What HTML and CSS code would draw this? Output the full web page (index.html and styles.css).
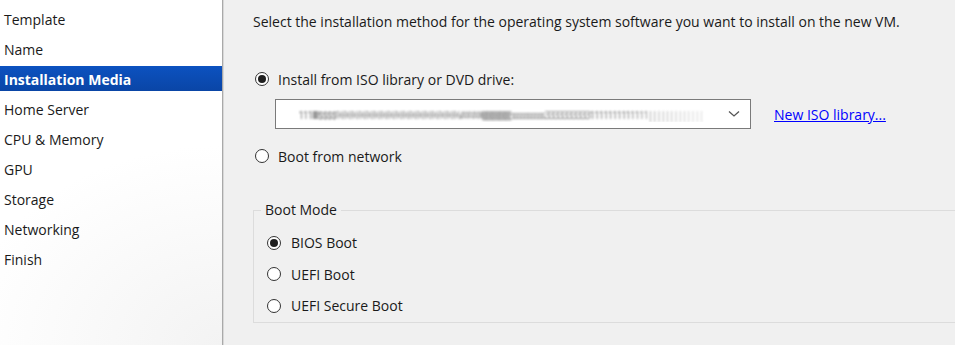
FILE: index.html
```html
<!DOCTYPE html>
<html>
<head>
<link rel="stylesheet" href="styles.css">
</head>
<body>
<div class="wizard">
  <div class="steps">
    <div class="step">Template</div>
    <div class="step">Name</div>
    <div class="step current">Installation Media</div>
    <div class="step">Home Server</div>
    <div class="step">CPU &amp; Memory</div>
    <div class="step">GPU</div>
    <div class="step">Storage</div>
    <div class="step">Networking</div>
    <div class="step">Finish</div>
  </div>
  <div class="page">
    <p class="intro">Select the installation method for the operating system software you want to install on the new VM.</p>

    <div class="option first">
      <span class="radio checked"></span>
      <span>Install from ISO library or DVD drive:</span>
    </div>

    <div class="isorow">
      <div class="combo">
        <span class="blurred">111IIIII$$$$%%%%%%%%%%%%%%%%%####((((((((((((((((((((ssssssssss33333333331111111111111|||||||||||||</span>
        <svg class="chevron" width="12" height="8" viewBox="0 0 12 8">
          <polyline points="1,1.5 6,6 11,1.5" fill="none" stroke="#555" stroke-width="1.3"/>
        </svg>
      </div>
      <a class="link" href="#">New ISO library...</a>
    </div>

    <div class="option">
      <span class="radio"></span>
      <span>Boot from network</span>
    </div>

    <div class="group">
      <div class="legend">Boot Mode</div>
      <div class="option sub">
        <span class="radio checked"></span>
        <span>BIOS Boot</span>
      </div>
      <div class="option sub">
        <span class="radio"></span>
        <span>UEFI Boot</span>
      </div>
      <div class="option sub">
        <span class="radio"></span>
        <span>UEFI Secure Boot</span>
      </div>
    </div>
  </div>
</div>
</body>
</html>
```

FILE: styles.css
```css
html, body
{
  margin: 0;
  padding: 0;
  width: 100%;
  height: 100%;
  overflow: hidden;
  font-family: "Open Sans", "Noto Sans", sans-serif;
  font-size: 14px;
  color: #1a1a1a;
  background-color: #f0f0f0;
}

.wizard
{
  display: flex;
  height: 345px;
}

/* left list of wizard steps */
.steps
{
  width: 222px;
  flex: none;
  padding-top: 6px;
  background: radial-gradient(ellipse 260px 200px at 100% 100%, #f3f3f3, #ffffff);
  border-right: 1px solid #a9a9a9;
  box-shadow: 1px 0 0 #d8d8d8;
}

.step
{
  height: 25px;
  line-height: 27px;
  margin-bottom: 5px;
  padding-left: 4px;
  white-space: nowrap;
}

.step.current
{
  color: white;
  font-weight: bold;
  background: linear-gradient(#0c52c0, #0a45a6);
}

.page
{
  flex: 1;
  padding-left: 30px;
  min-width: 0;
}

.intro
{
  margin: 11px 0 0 0;
  line-height: 22px;
  white-space: nowrap;
}

.option
{
  display: flex;
  align-items: center;
  height: 22px;
  gap: 9px;
  padding-left: 2px;
}

.option.first
{
  margin-top: 35px;
}

.radio
{
  box-sizing: border-box;
  width: 14px;
  height: 14px;
  border: 1px solid #333333;
  border-radius: 50%;
  background-color: white;
  display: flex;
  align-items: center;
  justify-content: center;
}

.radio.checked::after
{
  content: "";
  width: 8px;
  height: 8px;
  border-radius: 50%;
  background-color: #1f1f1f;
}

.isorow
{
  display: flex;
  align-items: center;
  margin: 9px 0 16px 22px;
}

.combo
{
  box-sizing: border-box;
  width: 476px;
  height: 30px;
  border: 1px solid #7a7a7a;
  background-color: white;
  display: flex;
  align-items: center;
  padding: 0 10px 0 22px;
  overflow: hidden;
}

/* file name, smeared as in the original capture */
.blurred
{
  flex: 1;
  overflow: hidden;
  white-space: nowrap;
  font-size: 11px;
  letter-spacing: -1.8px;
  color: #7a7a7a;
  filter: blur(0.8px);
  margin-right: 20px;
  -webkit-mask-image: linear-gradient(to right, black 80%, rgba(0,0,0,0.3));
}

.chevron
{
  flex: none;
}

.link
{
  margin-left: 23px;
  color: #0000ff;
  text-decoration: underline;
  white-space: nowrap;
}

.group
{
  margin-top: 43px;
  border: 1px solid #dcdcdc;
  border-right: none;
  padding: 16px 0 0 11px;
  position: relative;
}

.legend
{
  position: absolute;
  top: -12px;
  left: 7px;
  padding: 0 4px;
  background-color: #f0f0f0;
  line-height: 22px;
}

.option.sub
{
  height: 31.5px;
  gap: 10px;
}
```
